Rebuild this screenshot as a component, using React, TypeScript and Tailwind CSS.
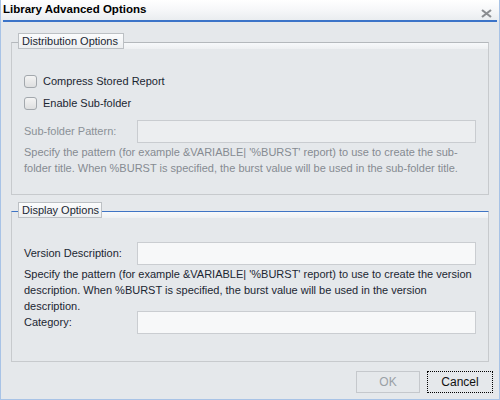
import React from 'react';

const Checkbox: React.FC<{ label: string }> = ({ label }) => (
  <label className="flex items-center h-[22px] gap-[6px] text-[#1b2632]">
    <span className="w-[13px] h-[13px] rounded-[3px] border border-[#a3a8ad] bg-gradient-to-b from-[#f4f4f4] to-[#dedfe0] shrink-0" />
    <span>{label}</span>
  </label>
);

const Fieldset: React.FC<{ title: string; legendWidth: string; active?: boolean; children: React.ReactNode }> = ({
  title,
  legendWidth,
  active,
  children,
}) => (
  <div className="flex flex-col">
    {/* legend row */}
    <div className="flex h-[16px]">
      <div className={`w-[7px] mt-[9px] border-t border-l border-l-[#c7cacd] ${active ? 'border-t-[#3f74c4]' : 'border-t-[#b4b8bc]'}`} />
      <div
        className={`${legendWidth} shrink-0 whitespace-nowrap h-[16px] border border-[#bcc0c4] bg-gradient-to-b from-[#fbfcfd] to-[#eceef0] pl-[3px] flex items-center text-[11px] text-[#1b2632] leading-none`}
      >
        {title}
      </div>
      <div
        className={`flex-1 mt-[9px] border-t border-r border-r-[#c7cacd] bg-gradient-to-b from-[#f7f9fb] to-[#eef0f2] ${active ? 'border-t-[#3f74c4]' : 'border-t-[#b4b8bc]'}`}
      />
    </div>
    <div className="border-x border-b border-[#c7cacd] px-[12px]">{children}</div>
  </div>
);

export default function App() {
  return (
    <div className="w-[500px] h-[400px] bg-[#e5e8eb] border-x border-b border-[#a8c3e6] flex flex-col font-['Liberation_Sans',Arial,sans-serif] text-[11px] overflow-hidden">
      {/* title bar */}
      <div className="h-[20px] flex items-start justify-between pl-[2px] pr-[7px] bg-gradient-to-b from-white via-[#f6f7f9] to-[#eaedf0]">
        <span className="font-bold text-[11.5px] text-black leading-[18px]">Library Advanced Options</span>
        <svg width="11" height="9" viewBox="0 0 11 9" className="mt-[9px]">
          <path d="M1 1 L10 8 M10 1 L1 8" stroke="#8a8d91" strokeWidth="2.2" />
        </svg>
      </div>
      <div className="mx-[2px] h-[2px] bg-[#3c74c8]" />

      <div className="flex flex-col px-[10px] pt-[11px]">
        <Fieldset title="Distribution Options" legendWidth="w-[106px]">
          <div className="pt-[21px]">
            <Checkbox label="Compress Stored Report" />
            <Checkbox label="Enable Sub-folder" />
            <div className="flex items-center h-[23px] mt-[6px] text-[#8b9197]">
              <span className="w-[113px] shrink-0">Sub-folder Pattern:</span>
              <div className="flex-1 h-[23px] border border-[#c9ccd0] bg-[#eceef0]" />
            </div>
            <p className="text-[#858b92] leading-[16px] mt-[1px] pb-[18px]">
              Specify the pattern (for example &amp;VARIABLE| '%BURST' report) to use to create the sub-folder title. When %BURST is specified, the burst value will be used in the sub-folder title.
            </p>
          </div>
        </Fieldset>

        <div className="h-[7px]" />

        <Fieldset title="Display Options" legendWidth="w-[84px]" active>
          <div className="pt-[24px]">
            <div className="flex items-center h-[23px] text-[#1b2632]">
              <span className="w-[113px] shrink-0">Version Description:</span>
              <div className="flex-1 h-[23px] border border-[#cacdd1] bg-[#f7f8f9]" />
            </div>
            <p className="text-[#1b2632] leading-[16px] mt-[1px]">
              Specify the pattern (for example &amp;VARIABLE| '%BURST' report) to use to create the version description. When %BURST is specified, the burst value will be used in the version description.
            </p>
            <div className="flex items-center h-[23px] -mt-[3px] text-[#1b2632]">
              <span className="w-[113px] shrink-0">Category:</span>
              <div className="flex-1 h-[23px] border border-[#cacdd1] bg-[#f7f8f9]" />
            </div>
            <div className="h-[27px]" />
          </div>
        </Fieldset>
      </div>

      <div className="flex justify-end gap-[7px] pr-[6px] mt-[9px]">
        <button className="w-[64px] h-[22px] border border-[#c5c8cc] bg-[#e5e8eb] text-[#9aa0a6] text-[12px]">OK</button>
        <button className="w-[66px] h-[22px] border border-dotted border-black bg-[#e5e8eb] text-[#111] text-[12px]">Cancel</button>
      </div>
    </div>
  );
}
